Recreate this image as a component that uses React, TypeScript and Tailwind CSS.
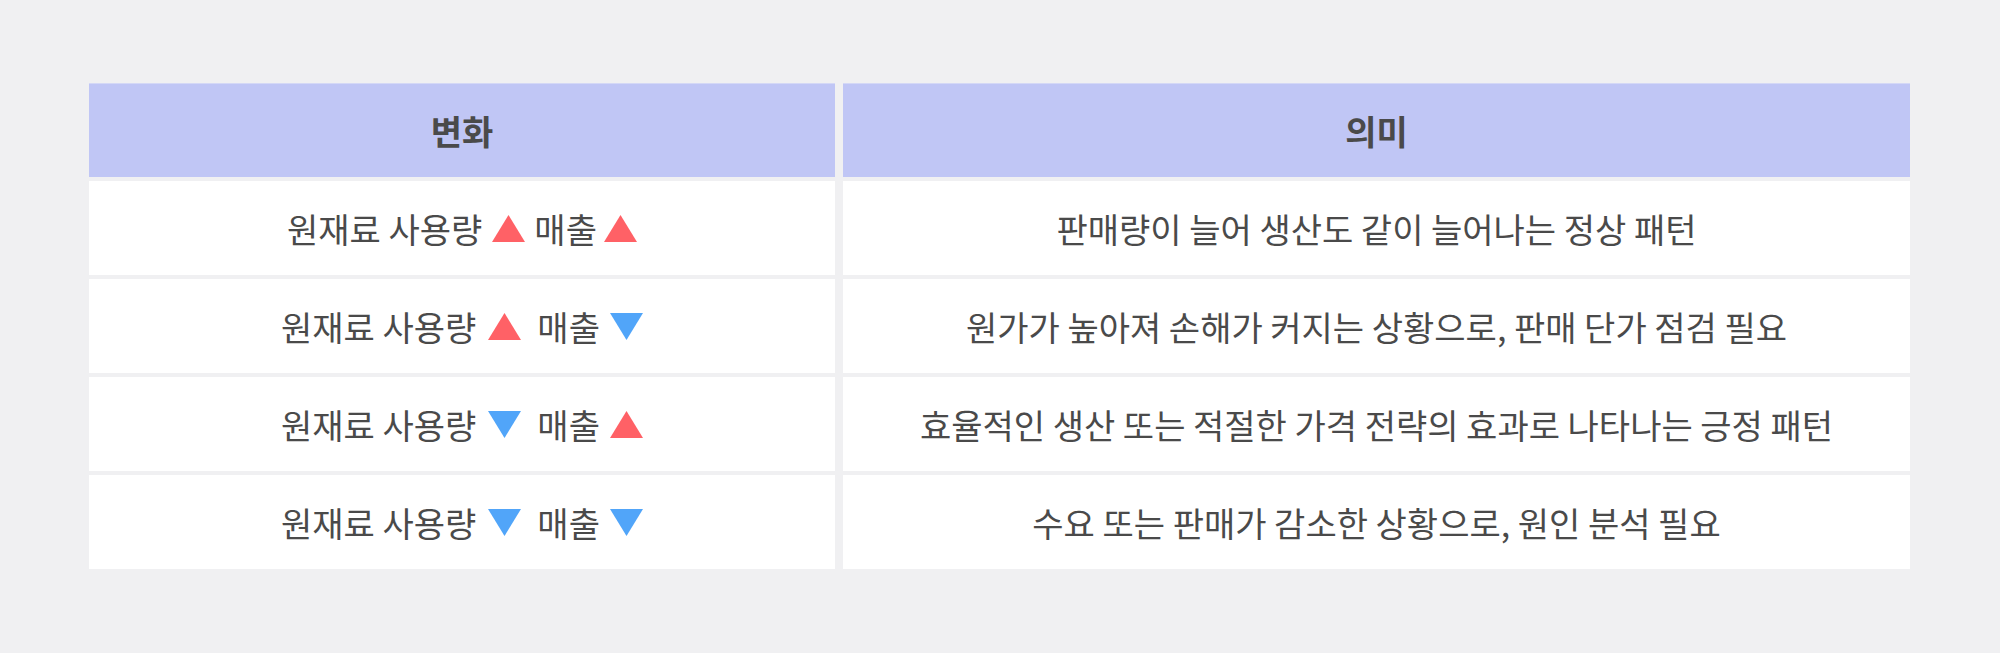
import React from 'react';

type Dir = 'up' | 'down';

interface Row {
  material: Dir;
  sales: Dir;
  meaning: string;
  wide?: boolean;
}

const rows: Row[] = [
  { material: 'up', sales: 'up', meaning: '판매량이 늘어 생산도 같이 늘어나는 정상 패턴' },
  { material: 'up', sales: 'down', meaning: '원가가 높아져 손해가 커지는 상황으로, 판매 단가 점검 필요', wide: true },
  { material: 'down', sales: 'up', meaning: '효율적인 생산 또는 적절한 가격 전략의 효과로 나타나는 긍정 패턴', wide: true },
  { material: 'down', sales: 'down', meaning: '수요 또는 판매가 감소한 상황으로, 원인 분석 필요', wide: true },
];

const Triangle = ({ dir }: { dir: Dir }) =>
  dir === 'up' ? (
    <svg width="33" height="27" viewBox="0 0 33 27" className="shrink-0">
      <polygon points="16.5,0 33,27 0,27" fill="#ff6166" />
    </svg>
  ) : (
    <svg width="33" height="27" viewBox="0 0 33 27" className="shrink-0">
      <polygon points="0,0 33,0 16.5,27" fill="#51a5f9" />
    </svg>
  );

export default function App() {
  return (
    <div
      className="w-[2000px] h-[653px] bg-[#f0f0f2] pl-[89px] pt-[83px]"
      style={{ fontFamily: '"Noto Sans CJK KR", "Noto Sans", sans-serif' }}
    >
      <div className="grid grid-cols-[746px_1067px] gap-x-[8px] gap-y-[4px] auto-rows-[94px] text-[#4a4a4a]">
        {/* header */}
        <div className="bg-[#c0c6f5] border-t border-[#d4d8f6] flex items-center justify-center text-[34px] font-bold">
          변화
        </div>
        <div className="bg-[#c0c6f5] border-t border-[#d4d8f6] flex items-center justify-center text-[34px] font-bold">
          의미
        </div>

        {rows.map((r, i) => (
          <React.Fragment key={i}>
            <div className="bg-white flex items-center justify-center text-[34px]">
              <span>원재료 사용량</span>
              <span className={r.wide ? 'ml-[12px] mr-[16px] flex' : 'ml-[10px] mr-[9px] flex'}>
                <Triangle dir={r.material} />
              </span>
              <span>매출</span>
              <span className={r.wide ? 'ml-[10px] flex' : 'ml-[7px] flex'}>
                <Triangle dir={r.sales} />
              </span>
            </div>
            <div className="bg-white flex items-center justify-center text-[34px]">
              {r.meaning}
            </div>
          </React.Fragment>
        ))}
      </div>
    </div>
  );
}
